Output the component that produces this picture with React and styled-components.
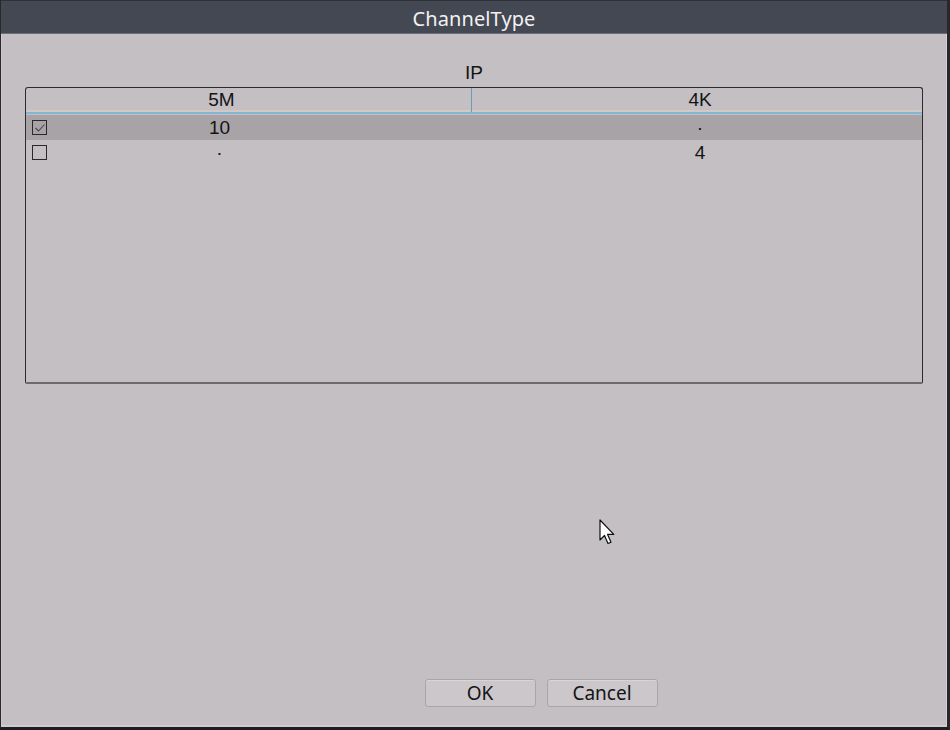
import React from "react";
import styled, { createGlobalStyle } from "styled-components";

const GlobalStyle = createGlobalStyle`
  html, body {
    margin: 0;
    padding: 0;
    background: #1f1d20;
  }
  * { box-sizing: border-box; }
`;

const rows = [
  { checked: true, a: "10", b: "·" },
  { checked: false, a: "·", b: "4" },
];

export default function App() {
  return (
    <>
      <GlobalStyle />
      <Window>
        <TitleBar>ChannelType</TitleBar>
        <Body>
          <GroupLabel>IP</GroupLabel>
          <TableBox>
            <HeaderRow>
              <HeadCell $first>5M</HeadCell>
              <HeadCell>4K</HeadCell>
            </HeaderRow>
            {rows.map((r, i) => (
              <Row key={i} $selected={r.checked}>
                <Cell $first>
                  <CheckBox>
                    {r.checked && (
                      <svg width="12" height="12" viewBox="0 0 12 12">
                        <path d="M1.5 6 L4.5 9 L10.5 2.5" fill="none" stroke="#4a474a" strokeWidth="1.1" />
                      </svg>
                    )}
                  </CheckBox>
                  {r.a}
                </Cell>
                <Cell>{r.b}</Cell>
              </Row>
            ))}
          </TableBox>
          <Footer>
            <Button>OK</Button>
            <Button>Cancel</Button>
          </Footer>
        </Body>
        <Cursor width="20" height="28" viewBox="0 0 20 28">
          <path d="M1 1 L1 21 L5.5 16.5 L9 24.5 L12 23.2 L8.6 15.4 L14.8 15.4 Z" fill="#ffffff" stroke="#111111" strokeWidth="1.2" strokeLinejoin="round" />
        </Cursor>
      </Window>
    </>
  );
}

const Window = styled.div`
  position: relative;
  width: 950px;
  height: 730px;
  display: flex;
  flex-direction: column;
  background: #c3bfc3;
  border-left: 1px solid #2a272a;
  border-right: 3px solid #2a272a;
  border-bottom: 3px solid #1f1d20;
  overflow: hidden;
`;

const TitleBar = styled.div`
  height: 34px;
  flex-shrink: 0;
  display: flex;
  align-items: center;
  justify-content: center;
  padding: 3px 0 0 0;
  background: #434852;
  border-top: 1px solid #2e3139;
  border-bottom: 1px solid #6b6e75;
  color: #f2f2f2;
  font-family: "Noto Sans", sans-serif;
  font-size: 20px;
  letter-spacing: 0.1px;
`;

const Body = styled.div`
  flex: 1;
  display: flex;
  flex-direction: column;
  padding: 0 23px 18px 23px;
  border-left: 1px solid #cdc9cd;
  border-right: 1px solid #d3cfd3;
  border-bottom: 2px solid #cfcbcf;
`;

const GroupLabel = styled.div`
  height: 53px;
  padding-top: 27px;
  text-align: center;
  font-family: "Liberation Sans", Arial, sans-serif;
  font-size: 19px;
  color: #141414;
  line-height: 23px;
`;

const TableBox = styled.div`
  height: 297px;
  border: 1px solid #2b2a2c;
  border-bottom: 2px solid #6d696d;
  border-radius: 3px 3px 2px 2px;
`;

const HeaderRow = styled.div`
  display: grid;
  grid-template-columns: 446px 1fr;
  height: 26px;
  border-bottom: 2px solid #84b6d3;
  box-shadow: inset 0 -2px 0 #d2c9c4;
`;

const HeadCell = styled.div`
  display: flex;
  align-items: center;
  justify-content: center;
  padding-right: ${(p) => (p.$first ? "54px" : "0")};
  padding-left: ${(p) => (p.$first ? "0" : "6px")};
  border-right: ${(p) => (p.$first ? "1px solid #6f9bb8" : "none")};
  font-family: "Liberation Sans", Arial, sans-serif;
  font-size: 19px;
  color: #141414;
`;

const Row = styled.div`
  display: grid;
  grid-template-columns: 446px 1fr;
  height: 25px;
  margin-top: ${(p) => (p.$selected ? "1px" : "0")};
  background: ${(p) => (p.$selected ? "#a7a3a7" : "transparent")};
`;

const Cell = styled.div`
  position: relative;
  display: flex;
  align-items: center;
  justify-content: center;
  padding-right: ${(p) => (p.$first ? "59px" : "0")};
  padding-left: ${(p) => (p.$first ? "0" : "6px")};
  font-family: "Liberation Sans", Arial, sans-serif;
  font-size: 19px;
  color: #141414;
`;

const CheckBox = styled.span`
  position: absolute;
  left: 6px;
  top: 5px;
  width: 15px;
  height: 15px;
  border: 1.5px solid #2a282a;
  display: flex;
  align-items: center;
  justify-content: center;
`;

const Footer = styled.div`
  margin-top: auto;
  display: flex;
  justify-content: center;
  gap: 11px;
  padding-left: 134px;
`;

const Button = styled.button`
  width: 111px;
  height: 28px;
  padding: 0;
  background: #cbc7cb;
  border: 1px solid #a9a5a9;
  border-radius: 3px;
  box-shadow: inset 0 1px 0 #d8d4d8;
  font-family: "Noto Sans", sans-serif;
  font-size: 19px;
  color: #141414;
  line-height: 26px;
`;

const Cursor = styled.svg`
  position: absolute;
  left: 598px;
  top: 519px;
`;
